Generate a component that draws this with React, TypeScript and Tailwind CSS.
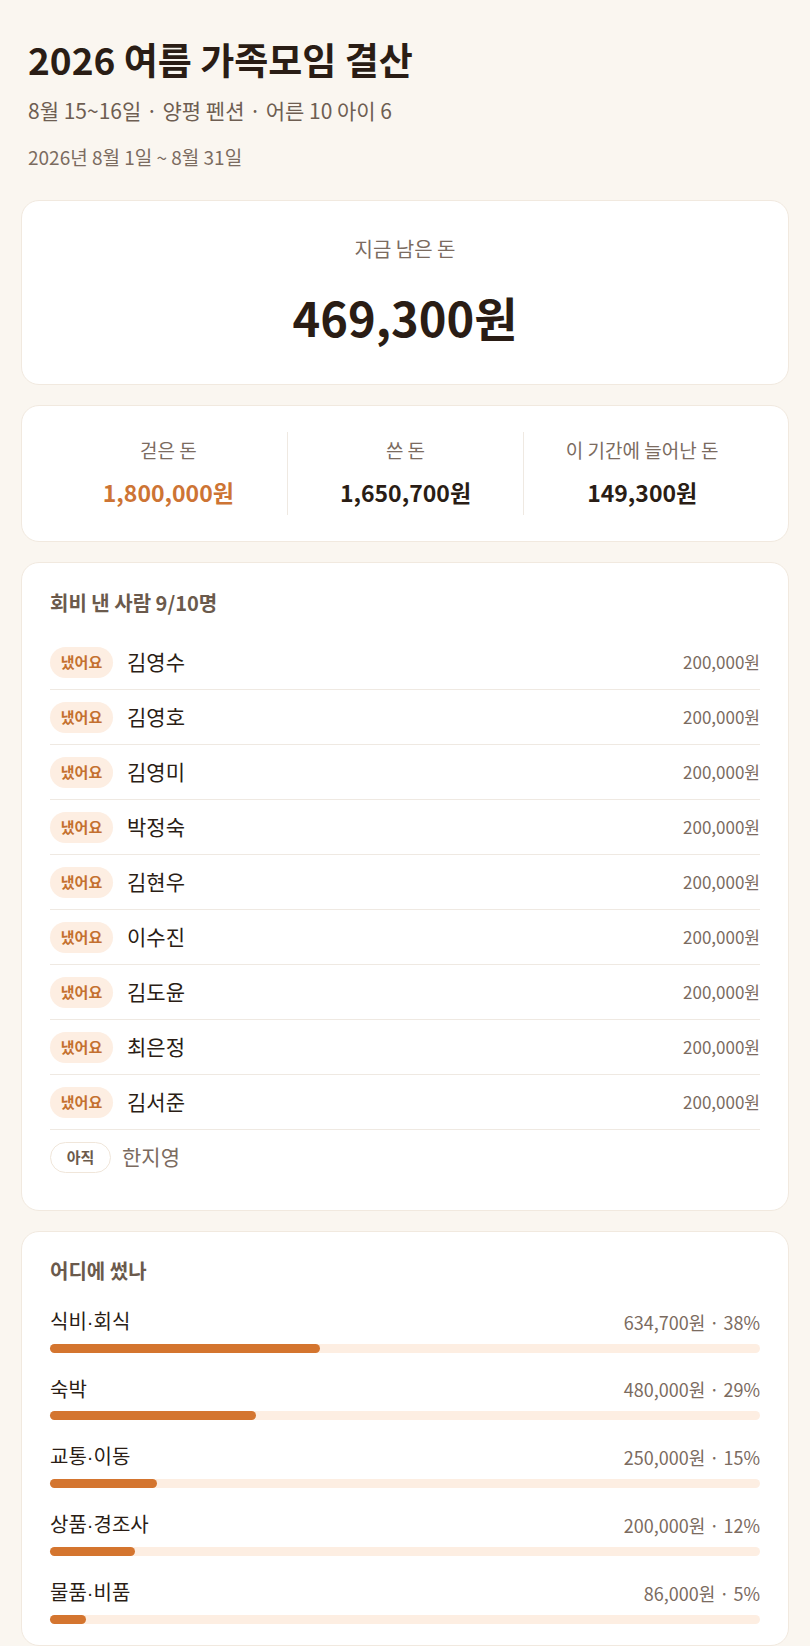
const FONT = "font-['Noto_Sans_CJK_KR','Noto_Sans',sans-serif]";

const MEMBERS = [
  { name: "김영수", paid: true },
  { name: "김영호", paid: true },
  { name: "김영미", paid: true },
  { name: "박정숙", paid: true },
  { name: "김현우", paid: true },
  { name: "이수진", paid: true },
  { name: "김도윤", paid: true },
  { name: "최은정", paid: true },
  { name: "김서준", paid: true },
  { name: "한지영", paid: false },
];

// 항목 이름은 "앞·뒤"로 나눠서 가운뎃점을 좁게 찍는다
const SPEND = [
  { label: ["식비", "회식"], amount: "634,700원", pct: 38 },
  { label: ["숙박"], amount: "480,000원", pct: 29 },
  { label: ["교통", "이동"], amount: "250,000원", pct: 15 },
  { label: ["상품", "경조사"], amount: "200,000원", pct: 12 },
  { label: ["물품", "비품"], amount: "86,000원", pct: 5 },
];

const STATS = [
  { label: "걷은 돈", value: "1,800,000원", accent: true },
  { label: "쓴 돈", value: "1,650,700원", accent: false },
  { label: "이 기간에 늘어난 돈", value: "149,300원", accent: false },
];

function Card({ className, children }: { className?: string; children: React.ReactNode }) {
  return (
    <section className={`rounded-[18px] border border-[#f1e9df] bg-white ${className ?? ""}`}>
      {children}
    </section>
  );
}

export default function App() {
  return (
    <div className={`${FONT} min-h-screen bg-[#faf6f0] px-[21px] pt-[38px] pb-10 text-[#2a1d15]`}>
      <header className="px-[7px]">
        <h1 className="text-[37px] font-bold leading-[42px]">2026 여름 가족모임 결산</h1>
        <p className="mt-[17px] text-[21px] leading-[26px] text-[#6e5e52]">
          8월 15~16일 · 양평 펜션 · 어른 10 아이 6
        </p>
        <p className="mt-[23px] text-[19px] leading-[22px] text-[#7b6b5f]">2026년 8월 1일 ~ 8월 31일</p>
      </header>

      <div className="mt-[32px] flex flex-col gap-[20px]">
        <Card className="pt-[36px] pb-[38px] text-center">
          <div className="text-[20px] leading-[24px] text-[#7b6b5f]">지금 남은 돈</div>
          <div className="mt-[27px] text-[47px] font-bold leading-[58px]">469,300원</div>
        </Card>

        <Card className="px-[28px] py-[26px]">
          <div className="grid grid-cols-3">
            {STATS.map((s, i) => (
              <div
                key={s.label}
                className={`flex flex-col items-center pt-[6px] pb-[8px] ${i > 0 ? "border-l border-[#efe9e2]" : ""}`}
              >
                <div className="text-[19px] leading-[24px] text-[#7b6b5f]">{s.label}</div>
                <div
                  className={`mt-[15px] text-[23px] font-bold leading-[30px] ${
                    s.accent ? "text-[#cd7434]" : "text-[#2a1d15]"
                  }`}
                >
                  {s.value}
                </div>
              </div>
            ))}
          </div>
        </Card>

        <Card className="px-[28px] pt-[28px] pb-[26px]">
          <h2 className="text-[20px] font-bold leading-[24px] text-[#6b5a4c]">회비 낸 사람 9/10명</h2>
          <ul className="mt-[20px]">
            {MEMBERS.map((m, i) => (
              <li
                key={m.name}
                className={`flex items-center ${
                  i < MEMBERS.length - 1 ? "h-[55px] border-b border-[#efe9e2]" : "h-[54px]"
                }`}
              >
                {m.paid ? (
                  <span className="flex h-[31px] w-[63px] items-center justify-center rounded-full bg-[#fdeee2] text-[15px] font-semibold text-[#c4702f]">
                    냈어요
                  </span>
                ) : (
                  <span className="flex h-[31px] w-[61px] items-center justify-center rounded-full border border-[#f0e6da] bg-white text-[15px] font-semibold text-[#6b5a4c]">
                    아직
                  </span>
                )}
                <span className={`text-[21px] ${m.paid ? "ml-[14px] text-[#2a1d15]" : "ml-[11px] text-[#7b6b5f]"}`}>
                  {m.name}
                </span>
                {m.paid && <span className="ml-auto text-[17px] text-[#7b6b5f]">200,000원</span>}
              </li>
            ))}
          </ul>
        </Card>

        <Card className="px-[28px] pt-[27px] pb-[21px]">
          <h2 className="text-[20px] font-bold leading-[24px] text-[#6b5a4c]">어디에 썼나</h2>
          <div className="mt-[25px] flex flex-col gap-[23px]">
            {SPEND.map((s) => (
              <div key={s.amount}>
                <div className="flex items-center justify-between">
                  <span className="text-[20px] leading-[26px]">
                    {s.label.map((part, j) => (
                      <span key={part}>
                        {j > 0 && <span className="font-['Liberation_Sans',sans-serif]">·</span>}
                        {part}
                      </span>
                    ))}
                  </span>
                  <span className="text-[18px] leading-[26px] text-[#7b6b5f]">
                    {s.amount} · {s.pct}%
                  </span>
                </div>
                <div className="mt-[9px] h-[9px] w-full rounded-full bg-[#fdeee2]">
                  <div className="h-full rounded-full bg-[#d4752f]" style={{ width: `${s.pct}%` }} />
                </div>
              </div>
            ))}
          </div>
        </Card>
      </div>
    </div>
  );
}
